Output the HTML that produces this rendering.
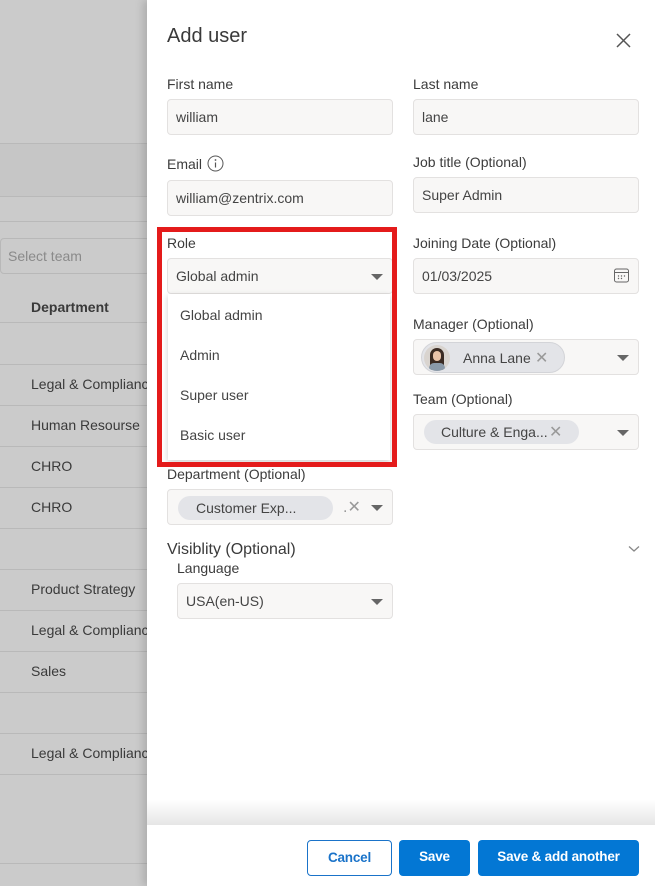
<!DOCTYPE html>
<html><head><meta charset="utf-8"><style>
*{box-sizing:border-box;margin:0;padding:0}
body{width:655px;height:886px;position:relative;overflow:hidden;font-family:"Liberation Sans",Arial,sans-serif;background:#cbcbcb;color:#333}
.a{position:absolute}
.hl{position:absolute;left:0;width:147px;height:1px;background:#b9b9b9}
.dep{position:absolute;left:31px;font-size:14px;color:#3a3a3a}
.panel{position:absolute;left:147px;top:0;width:508px;height:886px;background:#fff;box-shadow:-4px 0 8px rgba(0,0,0,.15)}
.lbl{position:absolute;font-size:14px;color:#3c3c3c}
.inp{position:absolute;height:36px;background:#f8f7f6;border:1px solid #e3e1e0;border-radius:4px;font-size:14px;color:#444;padding-left:8px;line-height:34px}
.caret{position:absolute;right:9px;top:15px;width:0;height:0;border-left:6px solid transparent;border-right:6px solid transparent;border-top:6px solid #666}
.chip{position:absolute;background:#e3e4e8;border-radius:14px;font-size:14px;color:#444;line-height:24px}
.btn{position:absolute;top:840px;height:36px;border-radius:4px;font-size:13.5px;font-weight:bold;text-align:center;line-height:34px;letter-spacing:-.2px}
</style></head><body>
<div class="hl" style="top:143px"></div>
<div class="a" style="left:0;top:144px;width:147px;height:52px;background:#c6c6c6"></div>
<div class="hl" style="top:196px"></div>
<div class="hl" style="top:221px"></div>
<div class="a" style="left:0;top:238px;width:150px;height:36px;border:1px solid #b8b8b8;border-radius:4px;font-size:14px;color:#8a8a8a;line-height:34px;padding-left:7px">Select team</div>
<div class="dep" style="top:299px;font-weight:bold">Department</div>
<div class="hl" style="top:322px"></div>
<div class="hl" style="top:364px"></div><div class="dep" style="top:376px">Legal &amp; Complianc</div>
<div class="hl" style="top:405px"></div><div class="dep" style="top:417px">Human Resourse</div>
<div class="hl" style="top:446px"></div><div class="dep" style="top:458px">CHRO</div>
<div class="hl" style="top:487px"></div><div class="dep" style="top:499px">CHRO</div>
<div class="hl" style="top:528px"></div>
<div class="hl" style="top:569px"></div><div class="dep" style="top:581px">Product Strategy</div>
<div class="hl" style="top:610px"></div><div class="dep" style="top:622px">Legal &amp; Complianc</div>
<div class="hl" style="top:651px"></div><div class="dep" style="top:663px">Sales</div>
<div class="hl" style="top:692px"></div>
<div class="hl" style="top:733px"></div><div class="dep" style="top:745px">Legal &amp; Complianc</div>
<div class="hl" style="top:774px"></div>
<div class="hl" style="top:863px"></div>

<div class="panel"></div>
<div class="a" style="left:167px;top:25px;font-size:20px;color:#3a3a3a">Add user</div>
<svg class="a" style="left:616px;top:33px" width="15" height="15" viewBox="0 0 15 15"><path d="M1 1L14 14M14 1L1 14" stroke="#555" stroke-width="1.5"/></svg>

<div class="lbl" style="left:167px;top:76px">First name</div>
<div class="inp" style="left:167px;top:99px;width:226px">william</div>
<div class="lbl" style="left:413px;top:76px">Last name</div>
<div class="inp" style="left:413px;top:99px;width:226px">lane</div>

<div class="lbl" style="left:167px;top:156px">Email</div>
<svg class="a" style="left:207px;top:155px" width="17" height="17" viewBox="0 0 17 17"><circle cx="8.5" cy="8.5" r="7.5" fill="none" stroke="#555" stroke-width="1"/><circle cx="8.5" cy="5" r=".9" fill="#555"/><path d="M8.5 7.5V12.5" stroke="#555" stroke-width="1.2"/></svg>
<div class="inp" style="left:167px;top:180px;width:226px">william@zentrix.com</div>
<div class="lbl" style="left:413px;top:154px">Job title (Optional)</div>
<div class="inp" style="left:413px;top:177px;width:226px">Super Admin</div>

<div class="lbl" style="left:167px;top:235px">Role</div>
<div class="inp" style="left:167px;top:258px;width:226px">Global admin<div class="caret"></div></div>
<div class="a" style="left:168px;top:294px;width:222px;height:166px;background:#fff;box-shadow:0 2px 6px rgba(0,0,0,.2);font-size:14px;color:#444">
<div class="a" style="left:12px;top:13px">Global admin</div>
<div class="a" style="left:12px;top:53px">Admin</div>
<div class="a" style="left:12px;top:93px">Super user</div>
<div class="a" style="left:12px;top:133px">Basic user</div>
</div>
<div class="a" style="left:157px;top:227px;width:240px;height:240px;border:5px solid #e41b1b"></div>

<div class="lbl" style="left:413px;top:235px">Joining Date (Optional)</div>
<div class="inp" style="left:413px;top:258px;width:226px">01/03/2025
<svg class="a" style="right:8px;top:8px" width="17" height="17" viewBox="0 0 17 17"><rect x="1.5" y="2" width="14" height="13" rx="2" fill="none" stroke="#666"/><path d="M1.5 5.5H15.5" stroke="#666"/><circle cx="5.5" cy="9" r=".7" fill="#666"/><circle cx="8.5" cy="9" r=".7" fill="#666"/><circle cx="11.5" cy="9" r=".7" fill="#666"/><circle cx="5.5" cy="11.5" r=".7" fill="#666"/><circle cx="8.5" cy="11.5" r=".7" fill="#666"/></svg></div>

<div class="lbl" style="left:413px;top:316px">Manager (Optional)</div>
<div class="inp" style="left:413px;top:339px;width:226px">
<div class="chip" style="left:7px;top:2px;width:144px;height:31px;border:1px solid #d3d4d8;border-radius:16px">
<div class="a" style="left:2px;top:2px;width:26px;height:26px;border-radius:50%;background:#d9d4cf;overflow:hidden"><div class="a" style="left:6px;top:3px;width:14px;height:22px;border-radius:7px 7px 2px 2px;background:#3a2a22"></div><div class="a" style="left:9px;top:6px;width:8px;height:10px;border-radius:4px;background:#e8c3a8"></div><div class="a" style="left:5px;top:18px;width:16px;height:10px;background:#8a99a8;border-radius:5px 5px 0 0"></div></div>
<span class="a" style="left:41px;top:3px">Anna Lane</span><span class="a" style="left:113px;top:4px;color:#999;font-size:16px">✕</span></div>
<div class="caret"></div></div>

<div class="lbl" style="left:413px;top:391px">Team (Optional)</div>
<div class="inp" style="left:413px;top:414px;width:226px">
<div class="chip" style="left:10px;top:5px;width:155px;height:24px"><span class="a" style="left:17px;top:0">Culture &amp; Enga...</span><span class="a" style="left:125px;top:1px;color:#999;font-size:16px">✕</span></div>
<div class="caret"></div></div>

<div class="lbl" style="left:167px;top:466px">Department (Optional)</div>
<div class="inp" style="left:167px;top:489px;width:226px">
<div class="chip" style="left:10px;top:6px;width:155px;height:24px"><span class="a" style="left:18px;top:0">Customer Exp...</span></div>
<span class="a" style="left:175px;top:1px;color:#999;font-size:16px">.✕</span>
<div class="caret"></div></div>

<div class="a" style="left:167px;top:541px;font-size:16px;color:#3a3a3a">Visiblity (Optional)</div>
<svg class="a" style="left:628px;top:545px" width="12" height="8" viewBox="0 0 12 8"><path d="M1 1.5L6 6L11 1.5" stroke="#888" fill="none" stroke-width="1.3"/></svg>
<div class="lbl" style="left:177px;top:560px">Language</div>
<div class="inp" style="left:177px;top:583px;width:216px">USA(en-US)<div class="caret"></div></div>

<div class="a" style="left:147px;top:800px;width:508px;height:25px;background:linear-gradient(#fff,#e6e6e6)"></div>
<div class="btn" style="left:307px;width:85px;border:1px solid #1a73c9;color:#1a73c9;background:#fff">Cancel</div>
<div class="btn" style="left:399px;width:71px;background:#0377d4;color:#fff">Save</div>
<div class="btn" style="left:478px;width:161px;background:#0377d4;color:#fff">Save &amp; add another</div>
</body></html>
